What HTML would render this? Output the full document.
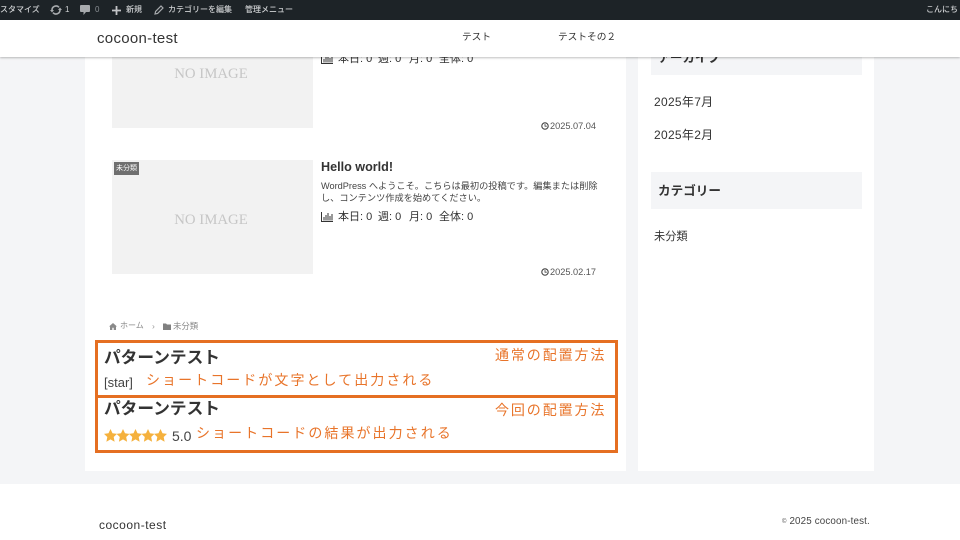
<!DOCTYPE html>
<html lang="ja">
<head>
<meta charset="utf-8">
<title>cocoon-test</title>
<style>
html,body{margin:0;padding:0;width:960px;height:540px;overflow:hidden;background:#f4f5f7;}
body{position:relative;font-family:"Liberation Sans","Noto Sans CJK JP",sans-serif;color:#333;}
.a{position:absolute;white-space:nowrap;line-height:1;}
.noimg{position:absolute;left:112px;width:201px;background:#f2f2f2;}
.noimg span{position:absolute;left:0;right:3px;text-align:center;font-family:"Liberation Serif",serif;font-size:14.800px;line-height:1;color:#c6c6c6;}
.or{color:#e8742a;}
.bar{color:#cfd1d3;font-size:8px;font-weight:500;}
.st{font-size:11px;color:#333;}
.h{font-size:16.700px;font-weight:bold;color:#333;}
</style>
</head>
<body>
<!-- main panels -->
<div class="a" style="left:85px;top:57px;width:541px;height:414px;background:#fff;"></div>
<div class="a" style="left:638px;top:57px;width:236px;height:414px;background:#fff;"></div>
<div class="a" style="left:0;top:484px;width:960px;height:56px;background:#fff;"></div>

<!-- cards -->
<div class="noimg" style="top:40px;height:88px;"><span style="top:27px;">NO IMAGE</span></div>
<svg class="a" style="left:321px;top:54px;" width="12" height="10" viewBox="0 0 12 10"><path d="M.5 0v9.500H12M3 5v3.500M5 3v5.500M7 1v7.500M9 4v4.500M11 2v6.500" fill="none" stroke="#333"/></svg>
<div class="a st" style="left:338px;top:54px;">本日: 0</div>
<div class="a st" style="left:378px;top:54px;">週: 0</div>
<div class="a st" style="left:409px;top:54px;">月: 0</div>
<div class="a st" style="left:439px;top:54px;">全体: 0</div>
<div class="a" style="left:541px;top:122px;font-size:9.200px;color:#555;"><svg width="8" height="8" viewBox="0 0 8 8" style="vertical-align:-1px;margin-right:1px;"><circle cx="4" cy="4" r="3.200" fill="none" stroke="#444" stroke-width="1.100"/><path d="M4 2v2.200h1.800" fill="none" stroke="#444" stroke-width=".8"/></svg>2025.07.04</div>

<div class="noimg" style="top:160px;height:114px;"><span style="top:53px;">NO IMAGE</span></div>
<div class="a" style="left:114px;top:162px;width:25px;height:13px;background:#6f6f6f;color:#fff;font-size:7px;line-height:13px;text-align:center;">未分類</div>
<div class="a" style="left:321px;top:160px;font-size:12.600px;line-height:14px;font-weight:bold;color:#333;">Hello world!</div>
<div class="a" style="left:321px;top:180px;font-size:9.200px;line-height:12px;color:#444;white-space:normal;width:280px;">WordPress へようこそ。こちらは最初の投稿です。編集または削除し、コンテンツ作成を始めてください。</div>
<svg class="a" style="left:321px;top:212px;" width="12" height="10" viewBox="0 0 12 10"><path d="M.5 0v9.500H12M3 5v3.500M5 3v5.500M7 1v7.500M9 4v4.500M11 2v6.500" fill="none" stroke="#333"/></svg>
<div class="a st" style="left:338px;top:212px;">本日: 0</div>
<div class="a st" style="left:378px;top:212px;">週: 0</div>
<div class="a st" style="left:409px;top:212px;">月: 0</div>
<div class="a st" style="left:439px;top:212px;">全体: 0</div>
<div class="a" style="left:541px;top:268px;font-size:9.200px;color:#555;"><svg width="8" height="8" viewBox="0 0 8 8" style="vertical-align:-1px;margin-right:1px;"><circle cx="4" cy="4" r="3.200" fill="none" stroke="#444" stroke-width="1.100"/><path d="M4 2v2.200h1.800" fill="none" stroke="#444" stroke-width=".8"/></svg>2025.02.17</div>

<!-- breadcrumb -->
<svg class="a" style="left:109px;top:323px;" width="8" height="7" viewBox="0 0 8 7"><path d="M4 0L0 3.500h1V7h2.300V4.800h1.400V7H7V3.500h1z" fill="#8a8a8a"/></svg>
<div class="a" style="left:120px;top:322px;font-size:8px;color:#888;">ホーム</div>
<div class="a" style="left:152px;top:322px;font-size:8.500px;color:#999;">›</div>
<svg class="a" style="left:163px;top:323px;" width="8" height="7" viewBox="0 0 8 7"><path d="M0 .5h3l1 1h4V7H0z" fill="#808080"/></svg>
<div class="a" style="left:173px;top:322px;font-size:8.400px;color:#888;">未分類</div>

<!-- orange boxes -->
<div class="a" style="left:95px;top:340px;width:517px;height:107px;border:3px solid #e56f22;background:#fff;"></div>
<div class="a" style="left:95px;top:395px;width:523px;height:3px;background:#e56f22;"></div>
<div class="a h" style="left:104px;top:350px;">パターンテスト</div>
<div class="a" style="left:104px;top:376px;font-size:13px;color:#444;">[star]</div>
<div class="a or" style="left:146px;top:373px;font-size:14px;letter-spacing:2.050px;">ショートコードが文字として出力される</div>
<div class="a or" style="left:495px;top:348px;font-size:14px;letter-spacing:1.900px;">通常の配置方法</div>
<div class="a h" style="left:104px;top:401px;">パターンテスト</div>
<svg class="a" style="left:104px;top:429px;" width="63" height="13" viewBox="0 0 63 13">
<g fill="#f5b13d">
<path d="M6.500 0l2 4.300 4.500.6-3.300 3.100.9 4.700-4.100-2.300-4.100 2.300.9-4.700L0 4.900l4.500-.6z"/>
<path transform="translate(12.500)" d="M6.500 0l2 4.300 4.500.6-3.300 3.100.9 4.700-4.100-2.300-4.100 2.300.9-4.700L0 4.900l4.500-.6z"/>
<path transform="translate(25)" d="M6.500 0l2 4.300 4.500.6-3.300 3.100.9 4.700-4.100-2.300-4.100 2.300.9-4.700L0 4.900l4.500-.6z"/>
<path transform="translate(37.500)" d="M6.500 0l2 4.300 4.500.6-3.300 3.100.9 4.700-4.100-2.300-4.100 2.300.9-4.700L0 4.900l4.500-.6z"/>
<path transform="translate(50)" d="M6.500 0l2 4.300 4.500.6-3.300 3.100.9 4.700-4.100-2.300-4.100 2.300.9-4.700L0 4.900l4.500-.6z"/>
</g></svg>
<div class="a" style="left:172px;top:429px;font-size:14px;color:#444;">5.0</div>
<div class="a or" style="left:196px;top:426px;font-size:14px;letter-spacing:2.050px;">ショートコードの結果が出力される</div>
<div class="a or" style="left:495px;top:403px;font-size:14px;letter-spacing:1.900px;">今回の配置方法</div>

<!-- sidebar -->
<div class="a" style="left:651px;top:40px;width:211px;height:35px;background:#f4f5f7;"></div>
<div class="a" style="left:658px;top:52px;font-size:12.600px;font-weight:bold;color:#333;">アーカイブ</div>
<div class="a" style="left:654px;top:96px;font-size:12px;letter-spacing:.3px;color:#333;">2025年7月</div>
<div class="a" style="left:654px;top:129px;font-size:12px;letter-spacing:.3px;color:#333;">2025年2月</div>
<div class="a" style="left:651px;top:172px;width:211px;height:37px;background:#f4f5f7;"></div>
<div class="a" style="left:658px;top:185px;font-size:12.600px;font-weight:bold;color:#333;">カテゴリー</div>
<div class="a" style="left:654px;top:232px;font-size:11.200px;color:#333;">未分類</div>

<!-- header -->
<div class="a" style="left:0;top:20px;width:960px;height:37px;background:#fff;box-shadow:0 1px 2px rgba(0,0,0,.25);"></div>
<div class="a" style="left:97px;top:31px;font-size:15px;letter-spacing:.3px;color:#333;">cocoon-test</div>
<div class="a" style="left:462px;top:33px;font-size:9.700px;color:#333;">テスト</div>
<div class="a" style="left:558px;top:33px;font-size:9.700px;color:#333;">テストその２</div>

<!-- admin bar -->
<div class="a" style="left:0;top:0;width:960px;height:20px;background:#1d2327;"></div>
<div class="a bar" style="left:0;top:6px;">スタマイズ</div>
<svg class="a" style="left:50px;top:4px;" width="12" height="12" viewBox="0 0 12 12"><path d="M2 6a4 4 0 0 1 7-2.600M10 6a4 4 0 0 1-7 2.600" fill="none" stroke="#a7aaad" stroke-width="1.600"/><path d="M0 6h4L2 8.500zM12 6H8l2-2.500z" fill="#a7aaad"/></svg>
<div class="a bar" style="left:65px;top:6px;">1</div>
<svg class="a" style="left:80px;top:5px;" width="10" height="11" viewBox="0 0 10 11"><path d="M1 0h8a1 1 0 0 1 1 1v5a1 1 0 0 1-1 1H6L3.500 10V7H1a1 1 0 0 1-1-1V1a1 1 0 0 1 1-1z" fill="#a7aaad"/></svg>
<div class="a" style="left:95px;top:6px;font-size:8px;color:#8a8f94;">0</div>
<svg class="a" style="left:112px;top:6px;" width="9" height="9" viewBox="0 0 9 9"><path d="M4.500 0v9M0 4.500h9" stroke="#c3c4c7" stroke-width="1.800"/></svg>
<div class="a bar" style="left:126px;top:6px;">新規</div>
<svg class="a" style="left:154px;top:5px;" width="10" height="10" viewBox="0 0 10 10"><path d="M1 9l.6-2.600L7 1l2 2-5.400 5.400z" fill="none" stroke="#a7aaad" stroke-width="1.200"/></svg>
<div class="a bar" style="left:168px;top:6px;">カテゴリーを編集</div>
<div class="a bar" style="left:245px;top:6px;">管理メニュー</div>
<div class="a bar" style="left:926px;top:6px;">こんにち</div>

<!-- footer -->
<div class="a" style="left:99px;top:519px;font-size:12px;letter-spacing:.5px;color:#333;">cocoon-test</div>
<div class="a" style="left:782px;top:517px;font-size:9.800px;color:#444;letter-spacing:.15px;"><span style="font-size:6px;vertical-align:1px;">©</span> 2025 cocoon-test.</div>
</body>
</html>
